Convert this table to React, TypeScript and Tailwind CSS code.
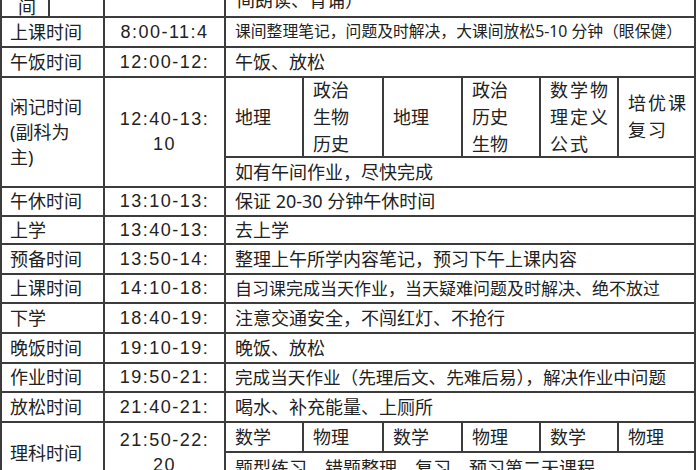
type Row = { label: string; time: string; note: string; size?: string }

const morning: Row[] = [
  {
    label: "上课时间",
    time: "8:00-11:4",
    note: "课间整理笔记，问题及时解决，大课间放松5-10 分钟（眼保健）",
    size: "text-[15.8px]",
  },
  { label: "午饭时间", time: "12:00-12:", note: "午饭、放松" },
]

const evening: Row[] = [
  { label: "午休时间", time: "13:10-13:", note: "保证 20-30 分钟午休时间" },
  { label: "上学", time: "13:40-13:", note: "去上学" },
  { label: "预备时间", time: "13:50-14:", note: "整理上午所学内容笔记，预习下午上课内容" },
  {
    label: "上课时间",
    time: "14:10-18:",
    note: "自习课完成当天作业，当天疑难问题及时解决、绝不放过",
    size: "text-[17px]",
  },
  { label: "下学", time: "18:40-19:", note: "注意交通安全，不闯红灯、不抢行" },
  { label: "晚饭时间", time: "19:10-19:", note: "晚饭、放松" },
  {
    label: "作业时间",
    time: "19:50-21:",
    note: "完成当天作业（先理后文、先难后易），解决作业中问题",
    size: "text-[17.6px]",
  },
  { label: "放松时间", time: "21:40-21:", note: "喝水、补充能量、上厕所" },
]

const timeCls =
  "flex flex-col items-center justify-center bg-white text-center font-['Liberation_Sans',sans-serif] text-[18px] leading-[25px] tracking-[1.5px]"
const labelCls = "col-span-2 flex items-center bg-white pl-[8px] text-[18px]"
const subCls = "flex items-center bg-white pl-[9px] text-[18px] leading-[27px]"

function SimpleRow({ row }: { row: Row }) {
  return (
    <>
      <div className={labelCls}>{row.label}</div>
      <div className={timeCls}>{row.time}</div>
      <div
        className={`col-span-6 flex items-center whitespace-nowrap bg-white pl-[9px] ${row.size ?? "text-[18px]"}`}
      >
        {row.note}
      </div>
    </>
  )
}

export default function App() {
  return (
    <div className="h-[470px] w-[700px] overflow-hidden bg-white font-['Noto_Sans','Noto_Sans_CJK_SC',sans-serif] text-[#222]">
      <div className="-mt-[24px] grid w-[696px] grid-cols-[46px_53px_119px_76px_78px_77px_76px_76px_75px] grid-rows-[38px_28px_28px_78px_28px_27px_26px_28px_27px_28px_28px_27px_28px_28px_30px] gap-[2px] bg-[#3c3c3c] p-[2px]">
        {/* row cut off at the top */}
        <div className="flex flex-col items-center justify-end bg-white pl-[4px] text-[18px] leading-[18px]">
          间
        </div>
        <div className="bg-white" />
        <div className="bg-white" />
        <div className="col-span-6 flex flex-col justify-end bg-white pb-[5px] pl-[11px] text-[18px] leading-[22px]">
          间朗读、背诵）
        </div>

        {morning.map((r, i) => (
          <SimpleRow key={i} row={r} />
        ))}

        {/* noon review block */}
        <div className="col-span-2 row-span-2 flex flex-col justify-center bg-white pl-[8px] text-[18px] leading-[25px]">
          <span>闲记时间</span>
          <span>(副科为</span>
          <span>主)</span>
        </div>
        <div className={`row-span-2 ${timeCls}`}>
          <span>12:40-13:</span>
          <span>10</span>
        </div>
        <div className={subCls}>地理</div>
        <div className={subCls}>
          <span>
            政治
            <br />
            生物
            <br />
            历史
          </span>
        </div>
        <div className={subCls}>地理</div>
        <div className={subCls}>
          <span>
            政治
            <br />
            历史
            <br />
            生物
          </span>
        </div>
        <div className={`${subCls} tracking-[2px]`}>
          <span>
            数学物
            <br />
            理定义
            <br />
            公式
          </span>
        </div>
        <div className={`${subCls} tracking-[2px]`}>
          <span>
            培优课
            <br />
            复习
          </span>
        </div>
        <div className="col-span-6 flex items-center bg-white pl-[9px] text-[18px]">
          如有午间作业，尽快完成
        </div>

        {evening.map((r, i) => (
          <SimpleRow key={i} row={r} />
        ))}

        {/* science block */}
        <div className="col-span-2 row-span-2 flex items-center bg-white pl-[8px] text-[18px]">
          理科时间
        </div>
        <div className={`row-span-2 ${timeCls}`}>
          <span>21:50-22:</span>
          <span>20</span>
        </div>
        {["数学", "物理", "数学", "物理", "数学", "物理"].map((s, i) => (
          <div key={i} className={subCls}>
            {s}
          </div>
        ))}
        <div className="col-span-6 flex items-center bg-white pl-[9px] text-[18px]">
          题型练习、错题整理、复习、预习第二天课程
        </div>
      </div>
    </div>
  )
}
